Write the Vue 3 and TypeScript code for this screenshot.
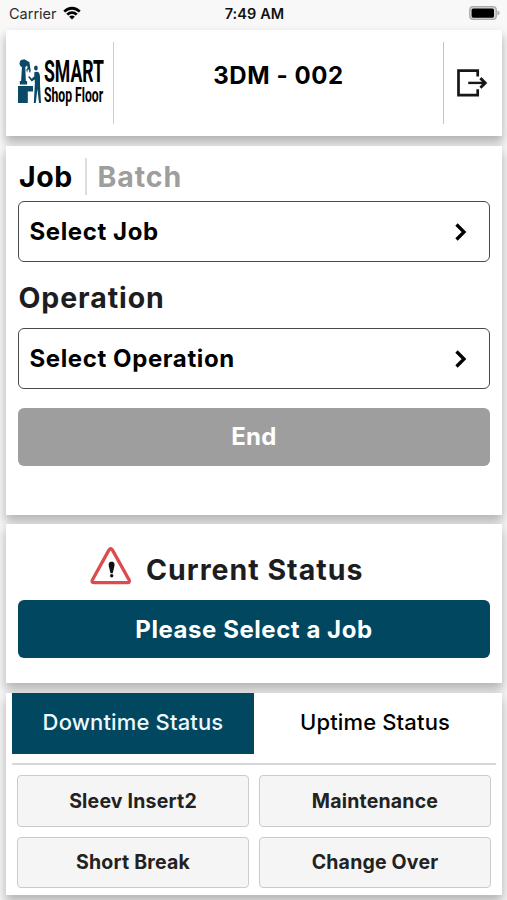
<script setup lang="ts">
import { ref } from 'vue'

type Mode = 'Job' | 'Batch'
type StatusTab = 'Downtime Status' | 'Uptime Status'

const mode = ref<Mode>('Job')
const activeTab = ref<StatusTab>('Downtime Status')
const tabs: StatusTab[] = ['Downtime Status', 'Uptime Status']
const reasons: string[] = ['Sleev Insert2', 'Maintenance', 'Short Break', 'Change Over']
</script>

<template>
  <div class="screen">
    <div class="statusbar">
      <div class="carrier">
        <span class="carrier-name">Carrier</span>
        <svg class="wifi" width="18" height="14" viewBox="0 0 18 14">
          <path d="M0.3 4.7C5.2-.5 12.8-.5 17.7 4.7L15.8 6.6C12 2.7 6 2.7 2.2 6.6Z" />
          <path d="M3.3 7.7C6.5 4.4 11.5 4.4 14.7 7.7L12.8 9.6C10.7 7.5 7.3 7.5 5.2 9.6Z" />
          <path d="M6.2 10.7C7.8 9.2 10.2 9.2 11.8 10.7L9 13.6Z" />
        </svg>
      </div>
      <span class="clock">7:49 AM</span>
      <svg class="battery" width="31" height="14" viewBox="0 0 31 14">
        <rect x="0.7" y="0.7" width="26.6" height="12.6" rx="3.4" fill="#d5d5d5" stroke="#a9a9a9" stroke-width="1.2" />
        <rect x="2.6" y="2.4" width="22.4" height="9.3" rx="1.6" fill="#000" />
        <path d="M28.5 4.5Q30.6 5.2 30.6 7T28.5 9.5Z" fill="#a9a9a9" />
      </svg>
    </div>

    <header class="card header">
      <div class="logo-cell">
        <svg class="logo" width="24" height="52" viewBox="0 0 24 52">
          <g fill="#0b4a66">
            <path d="M1 30H16V35.5H10.8V47H1Z" />
            <path d="M2.8 28.5V25H4.1L5 10H8.3L8.8 25H10.1V28.5Z" />
            <circle cx="6.5" cy="7.3" r="3.9" />
            <path d="M7 3.4L12.4 6L13.2 11.5L13.8 15L12.4 17L12 13.6L10.8 13.8L10.2 16.4L9.2 14L10.7 11.6L10 9.4L6.5 8.6Z" />
            <ellipse cx="18.9" cy="12" rx="1.9" ry="2.6" />
            <path d="M17.3 16.3Q19 15.2 21.3 16Q22.8 17.4 23 20.4V28.5L24 47H22L20.4 33L18.8 47H16.8L17.8 28.5V23.6L14.6 25.4L11.2 21L12.2 20L14.7 22.8L17.3 20.2Z" />
          </g>
        </svg>
        <div class="logo-words">
          <span class="smart">SMART</span>
          <span class="floor">Shop Floor</span>
        </div>
      </div>
      <h1 class="title">3DM - 002</h1>
      <button class="logout" aria-label="Log out">
        <svg width="32" height="30" viewBox="0 0 32 30" fill="none" stroke="#171717" stroke-width="2.7">
          <path d="M21.7 8.5V2.7H2.5V27.1H21.7V21.2" />
          <path d="M12.2 14.9H29" stroke-width="2.4" />
          <path d="M24.4 10.1L29.2 14.9L24.4 19.7" stroke-width="2.9" />
        </svg>
      </button>
    </header>

    <section class="card job-card">
      <div class="modes">
        <button class="mode" :class="{ off: mode !== 'Job' }" @click="mode = 'Job'">Job</button>
        <span class="mode-rule"></span>
        <button class="mode" :class="{ off: mode !== 'Batch' }" @click="mode = 'Batch'">Batch</button>
      </div>
      <button class="picker">
        <span>Select Job</span>
        <svg width="14" height="20" viewBox="0 0 14 20"><path d="M2.5 2.5L10 10L2.5 17.5" /></svg>
      </button>
      <h2 class="label">Operation</h2>
      <button class="picker">
        <span>Select Operation</span>
        <svg width="14" height="20" viewBox="0 0 14 20"><path d="M2.5 2.5L10 10L2.5 17.5" /></svg>
      </button>
      <button class="wide end"><span>End</span></button>
    </section>

    <section class="card current">
      <div class="current-head">
        <svg width="42" height="38" viewBox="0 0 42 38">
          <path d="M18.9 3.1Q20.7 .4 22.5 3.1L39 32.7Q40.2 35.5 37.3 35.7H4.2Q1.2 35.5 2.5 32.7Z" fill="none" stroke="#da4c4e" stroke-width="3.3" stroke-linejoin="round" />
          <path d="M21.6 14.7C25 14.7 24.7 17.4 24.2 20L22.7 26.2H20.5L19 20C18.5 17.4 18.2 14.7 21.6 14.7Z" fill="#111" />
          <circle cx="21.7" cy="28.8" r="1.7" fill="#111" />
        </svg>
        <h2>Current Status</h2>
      </div>
      <button class="wide please"><span>Please Select a Job</span></button>
    </section>

    <section class="card statuses">
      <div class="tabs">
        <button v-for="tab in tabs" :key="tab" class="tab" :class="{ active: activeTab === tab }" @click="activeTab = tab">
          {{ tab }}
        </button>
      </div>
      <div class="reasons">
        <button v-for="reason in reasons" :key="reason" class="reason">{{ reason }}</button>
      </div>
    </section>
  </div>
</template>

<style>
body {
  margin: 0;
  background: #f8f8f8;
}
</style>

<style scoped>
* {
  box-sizing: border-box;
}

.screen {
  width: 507px;
  height: 900px;
  overflow: hidden;
  display: flex;
  flex-direction: column;
  gap: 10px;
  padding: 0 5px 0 6px;
  background: #f8f8f8;
  font-family: Inter, "Liberation Sans", sans-serif;
  color: #1d1d1f;
}

button {
  font-family: inherit;
  border: 0;
  padding: 0;
  margin: 0;
  background: none;
  color: #000;
}

h1,
h2 {
  margin: 0;
}

.statusbar {
  height: 20px;
  flex: none;
  display: grid;
  grid-template-columns: 1fr auto 1fr;
  align-items: center;
  padding: 6px 2px 0 3px;
}

.carrier {
  display: flex;
  align-items: center;
  gap: 6px;
  font-size: 14.5px;
  color: #2b2b2b;
  line-height: 16px;
}

.wifi {
  position: relative;
  top: -1px;
}

.clock {
  font-size: 14.5px;
  font-weight: 600;
  line-height: 16px;
  letter-spacing: 0.1px;
  color: #111;
}

.battery {
  justify-self: end;
  position: relative;
  top: -1px;
}

.card {
  flex: none;
  background: #fff;
  box-shadow: 0 6px 10px 1px rgba(0, 0, 0, 0.27);
}

.header {
  height: 106px;
  padding: 12px 0;
  display: flex;
  border-radius: 3px 3px 0 0;
}

.logo-cell {
  width: 108px;
  border-right: 1.5px solid #cecece;
  padding: 14px 0 0 11px;
  display: flex;
  gap: 3px;
}

.logo {
  flex: none;
}

.logo-words {
  font-family: Roboto, sans-serif;
  font-weight: 700;
  color: #000;
  display: flex;
  flex-direction: column;
  white-space: nowrap;
}

.smart {
  font-size: 31.5px;
  line-height: 31px;
  transform: scaleX(0.56);
  transform-origin: 0 0;
  width: 58px;
}

.floor {
  font-size: 21px;
  line-height: 17px;
  transform: scaleX(0.58);
  transform-origin: 0 0;
  width: 58px;
}

.title {
  flex: 1;
  padding-top: 19px;
  text-align: center;
  font-size: 24px;
  line-height: 30px;
  font-weight: 650;
  letter-spacing: 0.6px;
  color: #000;
}

.logout {
  width: 59px;
  border-left: 1px solid #c4c4c4;
  display: flex;
  align-items: center;
  padding-left: 12px;
}

.job-card {
  height: 369px;
  padding: 12px;
}

.modes {
  display: flex;
  align-items: center;
  height: 37px;
  margin-bottom: 6px;
}

.mode {
  font-size: 28.5px;
  line-height: 36px;
  font-weight: 700;
  letter-spacing: 0.9px;
}

.mode:first-child {
  padding-left: 1px;
  letter-spacing: 0.5px;
}

.mode.off {
  color: #9e9e9e;
}

.mode-rule {
  width: 2px;
  height: 37px;
  background: #dedede;
  margin: 0 11px 0 12px;
}

.picker {
  width: 100%;
  height: 61px;
  border: 1.5px solid #4a4a4a;
  border-radius: 6px;
  background: #fff;
  display: flex;
  align-items: center;
  justify-content: space-between;
  padding: 0 21px 0 10.5px;
  font-size: 24px;
  line-height: 30px;
  font-weight: 700;
  letter-spacing: 0.6px;
}

.picker path {
  fill: none;
  stroke: #000;
  stroke-width: 3.3;
}

.label {
  font-size: 28.5px;
  line-height: 36px;
  font-weight: 700;
  letter-spacing: 0.9px;
  margin: 18px 0 12px;
  padding-left: 0.5px;
}

.wide {
  width: 100%;
  height: 58px;
  border-radius: 6px;
  color: #fff;
  font-size: 24px;
  line-height: 30px;
  font-weight: 700;
  letter-spacing: 0.55px;
}

.end {
  margin-top: 19px;
  background: #9e9e9e;
  letter-spacing: 0.3px;
}

.current {
  height: 159px;
  margin-top: -1px;
  padding: 23px 12px 0;
}

.current-head {
  display: flex;
  gap: 14px;
  height: 53px;
  padding-left: 72px;
}

.current-head h2 {
  font-size: 28.5px;
  line-height: 36px;
  padding-top: 5px;
  font-weight: 700;
  letter-spacing: 1px;
}

.please {
  background: #00475f;
  padding-top: 1px;
}

.statuses {
  height: 202px;
  padding: 0 6px;
}

.tabs {
  display: flex;
  height: 71.5px;
  border-bottom: 2px solid #d8d8d8;
}

.tab {
  flex: 1;
  height: 61px;
  padding-bottom: 3px;
  font-size: 22px;
  font-weight: 500;
  letter-spacing: 0.15px;
}

.tab.active {
  background: #00475f;
  color: #eef9ff;
}

.reasons {
  display: grid;
  grid-template-columns: 1fr 1fr;
  gap: 10px;
  padding: 10.5px 5px 0;
}

.reason {
  height: 51.5px;
  border: 1.5px solid #cbcbcb;
  border-radius: 4px;
  background: #f5f5f5;
  color: #222;
  font-size: 19.5px;
  font-weight: 700;
  letter-spacing: 0.2px;
}
</style>
